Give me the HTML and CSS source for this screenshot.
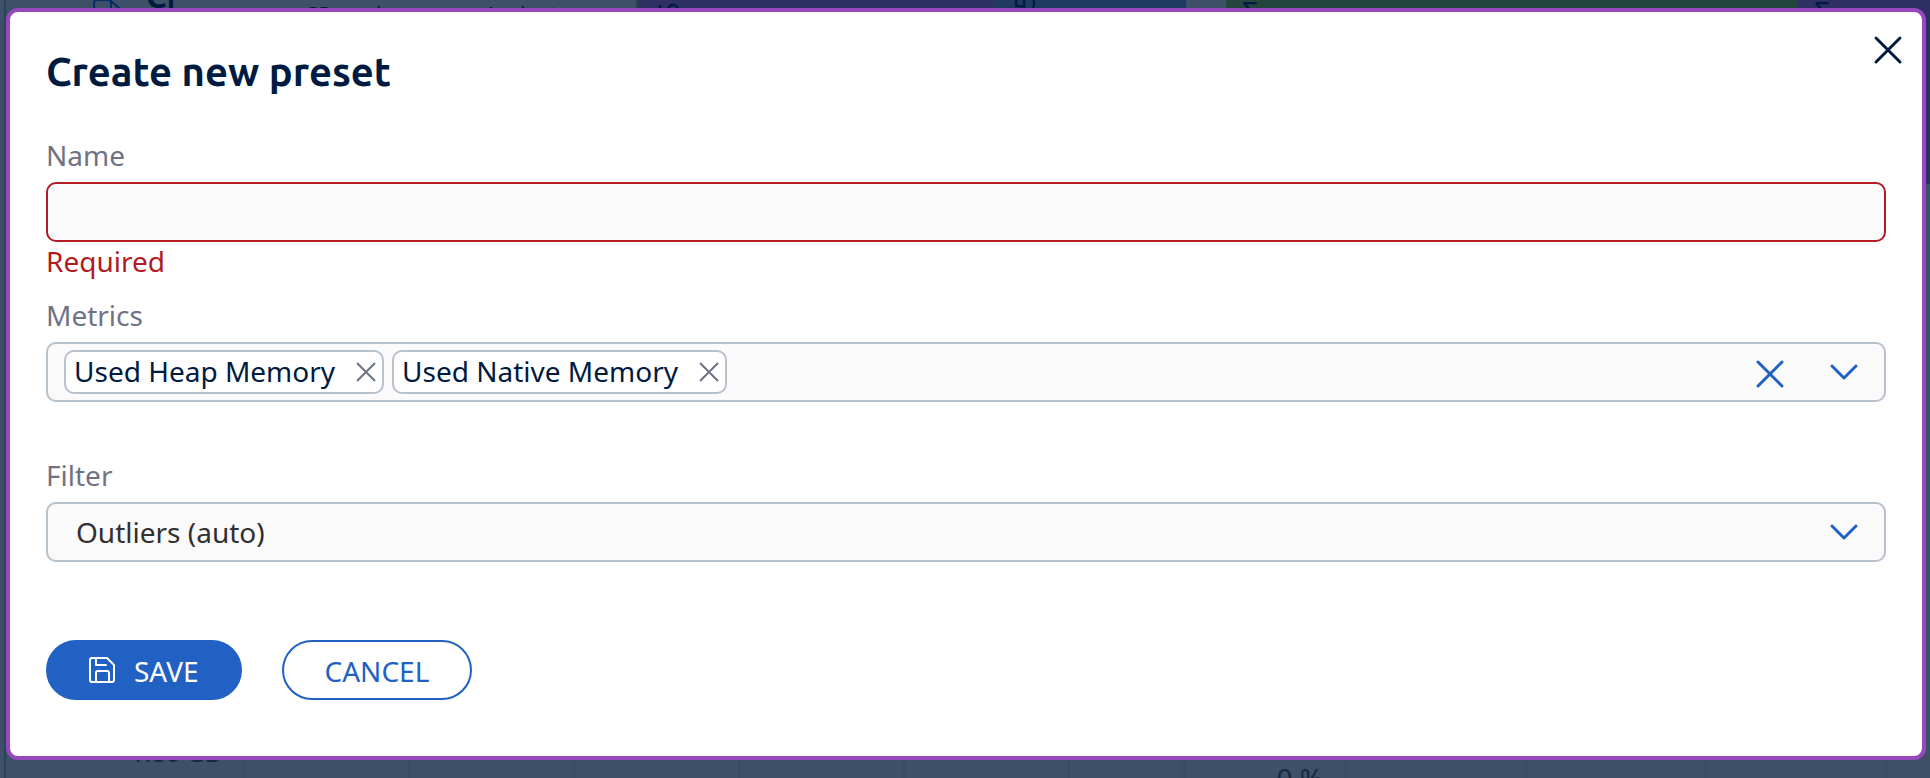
FILE: index.html
```html
<!DOCTYPE html>
<html lang="en">
<head>
<meta charset="utf-8">
<title>Create new preset</title>
<link rel="stylesheet" href="styles.css">
</head>
<body>
<div class="dashboard" aria-hidden="true">
  <div class="top-row">
    <div class="summary">
      <svg class="summary-icon" width="36" height="32" viewBox="0 0 36 32"><path d="M2 32V26q0-3 3-3H16q3 0 3 3v6M19 24l9 8"/></svg>
      <strong class="summary-title">Cr</strong>
      <span class="summary-note">GPs and processes 1 minute</span>
    </div>
    <div class="bars">
      <div class="bar violet"><span class="turned">5</span></div>
      <div class="bar blue"><span class="turned raised">5</span></div>
    </div>
    <div class="bars wide">
      <div class="bar green"><span>Σ</span></div>
      <div class="bar violet"><span>Σ</span></div>
    </div>
  </div>
  <div class="bottom-row">
    <div class="chart"><span class="axis">1.80 GB</span><i></i><i></i><i></i><i></i><i></i><i></i></div>
    <div class="chart small"><span class="axis">0 %</span><i></i><i></i><i></i><i></i></div>
  </div>
</div>
<div class="overlay">
  <form class="dialog" role="dialog" aria-labelledby="dialog-title">
    <header class="dialog-head">
      <h1 class="dialog-title" id="dialog-title">Create new preset</h1>
      <button class="icon-button close" type="button" aria-label="Close"><svg width="28" height="28" viewBox="0 0 28 28"><path d="M2 2 26 26M26 2 2 26"/></svg></button>
    </header>
    <div class="field">
      <label class="label" for="name">Name</label>
      <input class="control invalid" id="name" type="text" aria-describedby="name-error">
      <p class="error" id="name-error">Required</p>
    </div>
    <div class="field">
      <label class="label" for="metrics">Metrics</label>
      <div class="control multi">
        <span class="chip">Used Heap Memory<button class="icon-button chip-remove" type="button" aria-label="Remove Used Heap Memory"><svg width="18" height="18" viewBox="0 0 18 18"><path d="M0 0 18 18M18 0 0 18"/></svg></button></span>
        <span class="chip">Used Native Memory<button class="icon-button chip-remove" type="button" aria-label="Remove Used Native Memory"><svg width="18" height="18" viewBox="0 0 18 18"><path d="M0 0 18 18M18 0 0 18"/></svg></button></span>
        <input class="search" id="metrics" type="text">
        <button class="icon-button clear" type="button" aria-label="Clear metrics"><svg width="28" height="28" viewBox="0 0 28 28"><path d="M2 2 26 26M26 2 2 26"/></svg></button>
        <button class="icon-button open" type="button" aria-label="Show metrics"><svg width="28" height="16" viewBox="0 0 28 16"><path d="M2 2 14 14 26 2"/></svg></button>
      </div>
    </div>
    <div class="field">
      <label class="label" for="filter">Filter</label>
      <div class="select-wrap">
        <select class="control select" id="filter"><option>Outliers (auto)</option></select>
        <svg class="select-arrow" width="28" height="16" viewBox="0 0 28 16"><path d="M2 2 14 14 26 2"/></svg>
      </div>
    </div>
    <div class="actions">
      <button class="button primary" type="submit"><svg width="26" height="26" viewBox="0 0 26 26"><path d="M3 1H18L25 8V23Q25 25 23 25H3Q1 25 1 23V3Q1 1 3 1ZM7 1V8H17M7 25V16Q7 14 9 14H18Q20 14 20 16V25"/></svg>SAVE</button>
      <button class="button" type="button">CANCEL</button>
    </div>
  </form>
</div>
</body>
</html>
```
FILE: styles.css
```css
* { box-sizing: border-box; }

body {
  margin: 0;
  min-height: 100vh;
  display: grid;
  overflow: hidden;
  background: #3e5067;
  color: #001b3f;
  font-family: "Noto Sans", "Open Sans", sans-serif;
  font-size: 28px;
  line-height: 40px;
}

.dashboard, .overlay { grid-area: 1 / 1; min-width: 0; }

.dashboard {
  height: 100vh;
  overflow: hidden;
  display: flex;
  flex-direction: column;
  justify-content: space-between;
  margin-left: 4px;
  border-left: 2px solid #2c415f;
}

.top-row, .bottom-row {
  display: grid;
  grid-template-columns: 550px 550px 1fr;
  gap: 40px;
  padding-left: 40px;
}

.top-row { height: 184px; }
.summary { position: relative; overflow: hidden; }
.summary-icon { position: absolute; left: 46px; top: -23px; fill: none; stroke: #062d66; stroke-width: 2; }
.summary-title { position: absolute; left: 100px; top: -24px; font-family: Ubuntu, "Noto Sans", sans-serif; font-size: 32px; }
.summary-note { position: absolute; left: 258px; top: 0; font-size: 20px; line-height: 28px; }

.bars { display: grid; grid-template-columns: 356px 1fr; border-left: 2px solid #24443e; }
.bars.wide { grid-template-columns: 1fr 132px; border: 0; }
.bar { padding-left: 16px; }
.bar span { display: block; margin-top: -9px; }
.violet { background: #2e3065; }
.blue { background: #1e3a63; }
.green { background: #24443e; }
/* Values read upwards along the bar */
.bar .turned { width: 28px; margin-top: 2px; line-height: 28px; writing-mode: vertical-rl; transform: rotate(180deg); }
.bar .raised { margin-top: -6px; }

.bottom-row { height: 20px; }
.chart { display: grid; grid-template-columns: 197px repeat(5, 165px) 1fr; min-width: 0; }
.chart:first-child { grid-column: 1 / 3; border-right: 6px solid #394c68; }
.chart.small { grid-template-columns: 119px repeat(3, 180px) 1fr; border-bottom: 2px solid #374961; }
.chart i { border-left: 2px solid #394b66; }
.axis { margin-top: -26px; padding-right: 22px; font-size: 25px; font-weight: 500; text-align: right; white-space: nowrap; color: #142943; }
.small .axis { margin-top: 0; font-size: 28px; font-weight: 400; }

.overlay { z-index: 1; padding: 8px 4px 18px 6px; }

.dialog {
  min-height: 752px;
  padding: 26px 36px 56px;
  border: 4px solid #9648bd;
  border-radius: 12px;
  background: #fff;
}

.dialog-head { display: flex; justify-content: space-between; height: 98px; }
.dialog-title {
  margin: 0;
  padding-top: 8px;
  font-family: Ubuntu, "Noto Sans", sans-serif;
  font-size: 40px;
  line-height: 52px;
  font-weight: 600;
}

.icon-button { display: grid; place-items: center; padding: 0; border: 0; background: none; color: inherit; }
svg { display: block; overflow: visible; fill: none; stroke: currentColor; stroke-width: 3; stroke-linecap: round; stroke-linejoin: round; }
.close { width: 44px; height: 44px; margin: -10px -24px 0 0; }

.field { height: 160px; }
.label { display: block; height: 46px; line-height: 38px; color: #6f7285; }
.control {
  display: block;
  width: 100%;
  height: 60px;
  border: 2px solid #b7c1cc;
  border-radius: 10px;
  outline: 0;
  background: #fafafa;
  font: inherit;
}
.invalid { border-color: #b01c22; }
.error { margin: 0; line-height: 38px; color: #b01c22; }

.multi { display: flex; align-items: center; gap: 8px; padding: 0 26px 0 16px; }
.chip {
  display: flex;
  align-items: center;
  gap: 22px;
  height: 44px;
  padding: 0 7px 2px 8px;
  border: 2px solid #b7c1cc;
  border-radius: 10px;
  background: #fff;
  line-height: 38px;
  white-space: nowrap;
}
.chip-remove { margin-top: 2px; color: #6f7285; }
.chip-remove svg { stroke-width: 2; stroke-linecap: butt; }
.search { flex: 1; min-width: 0; border: 0; outline: 0; background: none; font: inherit; }
.clear { color: #2161c4; margin: 4px 38px 0 0; }
.open { color: #2161c4; }

.select-wrap { display: grid; align-items: center; }
.select, .select-arrow { grid-area: 1 / 1; }
.select { appearance: none; padding: 0 60px 0 28px; color: #303030; }
.select-arrow { justify-self: end; margin-right: 28px; color: #2161c4; pointer-events: none; }

.actions { display: flex; gap: 40px; padding-top: 24px; }
.button {
  display: flex;
  align-items: center;
  gap: 19px;
  height: 60px;
  padding: 2px 41px 0;
  border: 2px solid #2161c4;
  border-radius: 30px;
  background: #fff;
  color: #2161c4;
  font: inherit;
}
.button svg { margin-bottom: 2px; stroke-width: 2; }
.primary { background: #2161c4; color: #fff; }
```
